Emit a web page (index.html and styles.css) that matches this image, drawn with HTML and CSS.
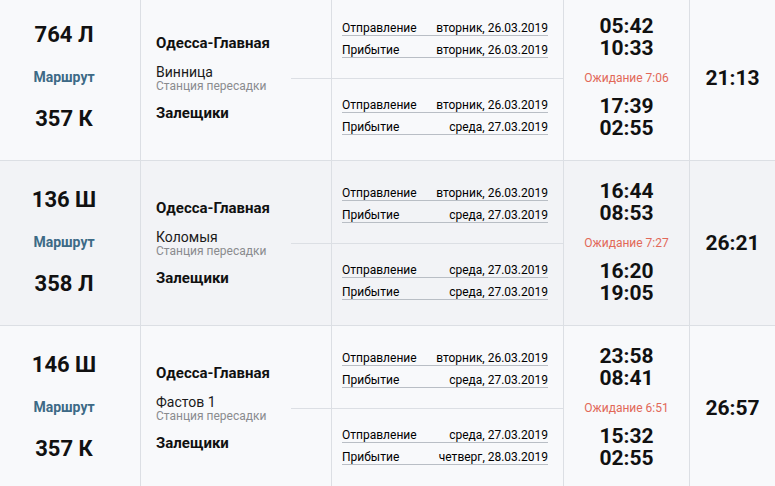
FILE: index.html
```html
<!DOCTYPE html>
<html lang="ru">
<head>
<meta charset="utf-8">
<link rel="stylesheet" href="styles.css">
</head>
<body>
<div class="list">
  <div class="row">
    <div class="c-train">
      <div class="num">764 Л</div>
      <div class="route">Маршрут</div>
      <div class="num num2">357 К</div>
    </div>
    <div class="c-stations">
      <div class="st">Одесса-Главная</div>
      <div class="transfer">Винница</div>
      <div class="transfer-note">Станция пересадки</div>
      <div class="st st-end">Залещики</div>
    </div>
    <div class="c-dates">
      <div class="seg seg1">
        <div class="line"><span>Отправление</span><span>вторник, 26.03.2019</span></div>
        <div class="line"><span>Прибытие</span><span>вторник, 26.03.2019</span></div>
      </div>
      <div class="seg seg2">
        <div class="line"><span>Отправление</span><span>вторник, 26.03.2019</span></div>
        <div class="line"><span>Прибытие</span><span>среда, 27.03.2019</span></div>
      </div>
    </div>
    <div class="c-times">
      <div class="times"><div>05:42</div><div>10:33</div></div>
      <div class="wait">Ожидание 7:06</div>
      <div class="times times2"><div>17:39</div><div>02:55</div></div>
    </div>
    <div class="c-total">21:13</div>
  </div>

  <div class="row alt">
    <div class="c-train">
      <div class="num">136 Ш</div>
      <div class="route">Маршрут</div>
      <div class="num num2">358 Л</div>
    </div>
    <div class="c-stations">
      <div class="st">Одесса-Главная</div>
      <div class="transfer">Коломыя</div>
      <div class="transfer-note">Станция пересадки</div>
      <div class="st st-end">Залещики</div>
    </div>
    <div class="c-dates">
      <div class="seg seg1">
        <div class="line"><span>Отправление</span><span>вторник, 26.03.2019</span></div>
        <div class="line"><span>Прибытие</span><span>среда, 27.03.2019</span></div>
      </div>
      <div class="seg seg2">
        <div class="line"><span>Отправление</span><span>среда, 27.03.2019</span></div>
        <div class="line"><span>Прибытие</span><span>среда, 27.03.2019</span></div>
      </div>
    </div>
    <div class="c-times">
      <div class="times"><div>16:44</div><div>08:53</div></div>
      <div class="wait">Ожидание 7:27</div>
      <div class="times times2"><div>16:20</div><div>19:05</div></div>
    </div>
    <div class="c-total">26:21</div>
  </div>

  <div class="row">
    <div class="c-train">
      <div class="num">146 Ш</div>
      <div class="route">Маршрут</div>
      <div class="num num2">357 К</div>
    </div>
    <div class="c-stations">
      <div class="st">Одесса-Главная</div>
      <div class="transfer">Фастов 1</div>
      <div class="transfer-note">Станция пересадки</div>
      <div class="st st-end">Залещики</div>
    </div>
    <div class="c-dates">
      <div class="seg seg1">
        <div class="line"><span>Отправление</span><span>вторник, 26.03.2019</span></div>
        <div class="line"><span>Прибытие</span><span>среда, 27.03.2019</span></div>
      </div>
      <div class="seg seg2">
        <div class="line"><span>Отправление</span><span>среда, 27.03.2019</span></div>
        <div class="line"><span>Прибытие</span><span>четверг, 28.03.2019</span></div>
      </div>
    </div>
    <div class="c-times">
      <div class="times"><div>23:58</div><div>08:41</div></div>
      <div class="wait">Ожидание 6:51</div>
      <div class="times times2"><div>15:32</div><div>02:55</div></div>
    </div>
    <div class="c-total">26:57</div>
  </div>
</div>
</body>
</html>
```

FILE: styles.css
```css
html, body {
  margin: 0;
  padding: 0;
  background: #f8f9fb;
  overflow: hidden;
}
body {
  font-family: Roboto, "Liberation Sans", Arial, sans-serif;
  color: #111;
}
.list {
  margin-top: -4px;
  width: 775px;
}
.row {
  display: grid;
  grid-template-columns: 141px 191px 232px 126px 85px;
  height: 165px;
  box-sizing: border-box;
  border-bottom: 1px solid #dcdfe4;
  background: #f8f9fb;
}
.row.alt {
  background: #f2f3f6;
}
.c-train, .c-stations, .c-dates, .c-times {
  border-right: 1px solid #dcdfe4;
}
/* column 1 */
.c-train {
  display: flex;
  flex-direction: column;
  align-items: center;
  padding: 26px 12px 0 0;
}
.num {
  font-size: 22px;
  font-weight: 700;
  line-height: 26px;
  color: #111;
}
.route {
  margin-top: 20px;
  font-size: 14px;
  font-weight: 700;
  line-height: 18px;
  color: #3d6a86;
}
.num2 {
  margin-top: 20px;
}
/* column 2 */
.c-stations {
  padding: 38px 0 0 15px;
  background: linear-gradient(#dcdfe4, #dcdfe4) no-repeat right 0 top 82px / 40px 1px;
}
.st {
  font-size: 15px;
  font-weight: 700;
  line-height: 18px;
  color: #111;
}
.transfer {
  margin-top: 12px;
  font-size: 14px;
  line-height: 16px;
  color: #1a1a1a;
}
.transfer-note {
  font-size: 12px;
  line-height: 12px;
  color: #8a8b8e;
}
.st-end {
  margin-top: 12px;
}
/* column 3 */
.c-dates {
  display: flex;
  flex-direction: column;
}
.seg {
  box-sizing: border-box;
  padding: 0 15px 0 10px;
}
.seg1 {
  height: 83px;
  padding-top: 18px;
  border-bottom: 1px solid #dcdfe4;
}
.seg2 {
  padding-top: 12px;
}
.line {
  display: flex;
  justify-content: space-between;
  padding-top: 7px;
  line-height: 14px;
  font-size: 12px;
  color: #000;
  border-bottom: 1px solid #b9bec5;
}
/* column 4 */
.c-times {
  display: flex;
  flex-direction: column;
  align-items: center;
  padding-top: 19px;
}
.times {
  font-size: 21px;
  font-weight: 700;
  line-height: 22px;
  text-align: center;
  color: #111;
}
.wait {
  margin-top: 11px;
  font-size: 12px;
  line-height: 16px;
  color: #e26858;
}
.times2 {
  margin-top: 9px;
}
/* column 5 */
.c-total {
  display: flex;
  align-items: center;
  justify-content: center;
  font-size: 21px;
  font-weight: 700;
  color: #111;
}
```
